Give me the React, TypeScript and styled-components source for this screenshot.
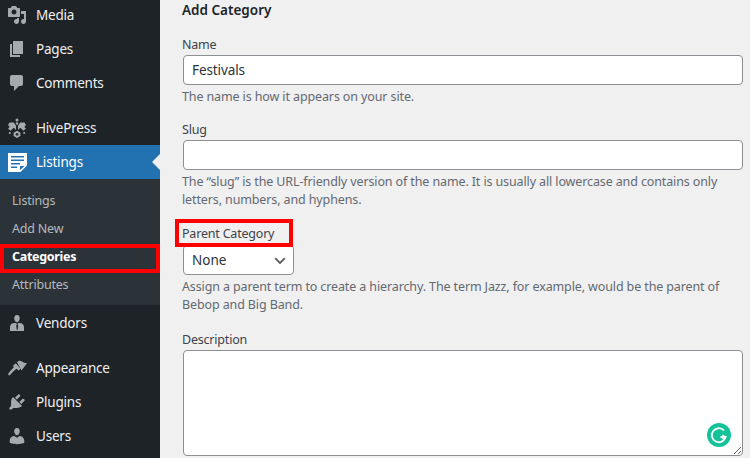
import React from 'react';
import styled, { createGlobalStyle } from 'styled-components';

const GlobalStyle = createGlobalStyle`
  html, body {
    margin: 0;
    height: 458px;
    overflow: hidden;
    background: #f0f0f1;
    font-family: "Noto Sans", "Open Sans", sans-serif;
    font-size: 13px;
  }
`;

const icons: Record<string, React.ReactNode> = {
  media: <path d="M13 11V4c0-.55-.45-1-1-1h-1.67L9 1H5L3.67 3H2c-.55 0-1 .45-1 1v7c0 .55.45 1 1 1h10c.55 0 1-.45 1-1zM7 4.5c1.38 0 2.5 1.12 2.5 2.5S8.38 9.5 7 9.5 4.5 8.38 4.5 7 5.62 4.5 7 4.5zM14 6h5v10.5c0 1.38-1.12 2.5-2.5 2.5S14 17.88 14 16.5s1.12-2.5 2.5-2.5c.17 0 .34.02.5.05V9h-3V6zm-4 8.05V13h2v3.5c0 1.38-1.12 2.5-2.5 2.5S7 17.88 7 16.5 8.12 14 9.5 14c.17 0 .34.02.5.05z" />,
  pages: <path d="M6 15V2h10v13H6zm-1 1h8v2H3V5h2v11z" />,
  comments: <path d="M5 2h9c1.1 0 2 .9 2 2v7c0 1.1-.9 2-2 2h-2l-5 5v-5H5c-1.1 0-2-.9-2-2V4c0-1.1.9-2 2-2z" />,
  hive: (
    <>
      <path d="M2.500 4.500h4.300l2.200 3.300v4.200L6.800 9.800 3.500 12.800 1 10.500l1.700-1.500L1 7z" />
      <path d="M17.500 4.500h-4.300L11 7.800v4.200l2.200-2.200 3.300 3 2.500-2.300-1.700-1.500L19 7z" />
      <path fillRule="evenodd" d="M10 12.800l3.400 2v3.200L10 20l-3.400-2v-3.200zM10 15l-1.400.8v1.200l1.400.8 1.400-.8v-1.200z" />
      <circle cx="10" cy="2" r="1.500" />
      <circle cx="10" cy="5.500" r="1.200" />
      <circle cx="2.800" cy="15" r="1.100" />
      <circle cx="17.200" cy="15" r="1.100" />
    </>
  ),
  listings: (
    <path
      fillRule="evenodd"
      d="M1 1h19v12.500L13.500 20H1zM4 4v1.600h13V4zM4 7.500v1.600h13V7.500zM4 11v1.600h9V11zM4 14.500v1.600h6v-1.600zM13 14v4l4.600-4z"
    />
  ),
  vendors: (
    <>
      <path d="M10 9.250c-2.270 0-2.730-3.440-2.730-3.440C7 4.020 7.820 2 9.970 2c2.160 0 2.980 2.020 2.710 3.810 0 0-.41 3.440-2.680 3.440z" />
      <path
        fillRule="evenodd"
        d="M5.400 10.200c-1.500.6-2.400 2.400-2.400 4.200V18h14v-3.600c0-1.800-.9-3.600-2.400-4.200l-3.400-.2-.7 1.400.7 1-.6 4.600h-.8L9.200 12.400l.7-1-.7-1.400z"
      />
    </>
  ),
  appearance: (
    <>
      <path d="M10 4.200c1.700-1.700 3.300-1.800 5-.6 1.600 1.100 3 1.700 5 1.700l-5.500 7.200z" />
      <path d="M8.800 5.200l4.700 5.600-1.800 1.800-2.200-1.900c-2 1.500-4.500 4-6.500 6.300-.8.9-2.400-.3-1.700-1.300 1.800-2.400 4-4.800 5.700-6.600L5.800 8z" />
    </>
  ),
  plugins: <path d="M13.11 4.360L9.870 7.600 8 5.730l3.240-3.240c.35-.34 1.050-.2 1.560.32.52.51.66 1.210.31 1.550zm-8 1.770l.91-1.120 9.010 9.010-1.190.84c-.71.71-2.630 1.160-3.820 1.160H6.140L4.900 17.260c-.59.59-1.540.59-2.120 0-.59-.58-.59-1.530 0-2.120l1.240-1.240v-3.880c0-1.130.4-3.190 1.090-3.890zm7.260 3.970l3.240-3.240c.34-.35 1.040-.21 1.550.31.52.51.66 1.210.31 1.550l-3.240 3.250z" />,
  users: <path d="M10 9.250c-2.270 0-2.730-3.440-2.730-3.440C7 4.020 7.820 2 9.970 2c2.160 0 2.980 2.020 2.710 3.810 0 0-.41 3.440-2.680 3.440zm0 2.570L12.720 10c2.390 0 4.520 2.330 4.520 4.530v2.490s-3.650 1.130-7.240 1.130c-3.650 0-7.240-1.130-7.240-1.130v-2.490c0-2.250 1.940-4.480 4.470-4.480z" />,
};

const Page = styled.div`
  display: flex;
  width: 750px;
  height: 458px;
  overflow: hidden;
  position: relative;
`;

const Sidebar = styled.nav`
  width: 160px;
  flex-shrink: 0;
  background: #1d2327;
  height: 458px;
  overflow: hidden;
`;

const MenuGroup = styled.div<{ $first?: boolean }>`
  margin-top: ${p => (p.$first ? '-2px' : '11px')};
`;

const MenuRow = styled.div<{ $active?: boolean }>`
  box-sizing: border-box;
  height: 34px;
  padding-bottom: 1px;
  display: flex;
  align-items: center;
  position: relative;
  color: ${p => (p.$active ? '#fff' : '#f0f0f1')};
  background: ${p => (p.$active ? '#2271b1' : 'transparent')};
  font-size: 13.5px;
  letter-spacing: -0.2px;
`;

const MenuIcon = styled.svg<{ $active?: boolean }>`
  width: 20px;
  height: 20px;
  margin: 1px 9px 0 7px;
  fill: ${p => (p.$active ? '#fff' : '#a7aaad')};
  flex-shrink: 0;
`;

const Arrow = styled.span`
  position: absolute;
  right: 0;
  top: 9px;
  border: 8px solid transparent;
  border-right-color: #f0f0f1;
  border-left-width: 0;
`;

const SubMenu = styled.div`
  background: #2c3338;
  padding: 8px 0 6px;
  margin-bottom: 1px;
`;

const SubItem = styled.div<{ $current?: boolean }>`
  height: 28px;
  line-height: 28px;
  padding-left: 12px;
  font-size: 12.5px;
  letter-spacing: ${p => (p.$current ? '-0.3px' : '-0.2px')};
  color: ${p => (p.$current ? '#fff' : '#b4b9be')};
  font-weight: ${p => (p.$current ? 700 : 400)};
`;

const Content = styled.main`
  flex: 1;
  padding: 0 7px 0 23px;
  color: #3c434a;
`;

const Heading = styled.h2`
  margin: 0 0 0 -1px;
  height: 22px;
  line-height: 21px;
  font-size: 13.5px;
  font-weight: 600;
  color: #1d2327;
`;

const Field = styled.div<{ $gap: number }>`
  margin-top: ${p => p.$gap}px;
  display: flex;
  flex-direction: column;
  align-items: flex-start;
`;

const Label = styled.label`
  margin-left: -1px;
  line-height: 18px;
  font-size: 12.5px;
  letter-spacing: -0.2px;
  color: #3c434a;
`;

const TextInput = styled.input`
  box-sizing: border-box;
  width: 560px;
  height: 30px;
  margin-top: 1px;
  padding: 0 8px;
  border: 1px solid #8c8f94;
  border-radius: 4px;
  background: #fff;
  font: 13.5px "Noto Sans", sans-serif;
  letter-spacing: -0.1px;
  color: #2c3338;
`;

const Select = styled.select`
  box-sizing: border-box;
  appearance: none;
  width: 111px;
  height: 30px;
  margin-top: 2px;
  padding: 0 24px 0 8px;
  border: 1px solid #8c8f94;
  border-radius: 4px;
  font: 13.5px "Noto Sans", sans-serif;
  color: #2c3338;
  background: #fff url("data:image/svg+xml;charset=utf8,%3Csvg xmlns='http://www.w3.org/2000/svg' width='20' height='20'%3E%3Cpath d='M5 6l5 5 5-5 2 1-7 7-7-7 2-1z' fill='%23555'/%3E%3C/svg%3E") no-repeat right 5px top 55%;
  background-size: 16px 16px;
`;

const Help = styled.p`
  margin: 3px 0 0 -1px;
  width: 561px;
  line-height: 18px;
  font-size: 12.5px;
  letter-spacing: -0.12px;
  color: #646970;
`;

const TextAreaWrap = styled.div`
  position: relative;
  width: 560px;
  height: 106px;
  margin-top: 1px;
`;

const TextArea = styled.textarea`
  box-sizing: border-box;
  display: block;
  width: 100%;
  height: 100%;
  border: 1px solid #8c8f94;
  border-radius: 4px;
  background: #fff;
  resize: vertical;
`;

const Grammarly = styled.svg`
  position: absolute;
  right: 12px;
  bottom: 9px;
  width: 24px;
  height: 24px;
`;

const RedBox = styled.div<{ $x: number; $y: number; $w: number; $h: number }>`
  position: absolute;
  left: ${p => p.$x}px;
  top: ${p => p.$y}px;
  width: ${p => p.$w}px;
  height: ${p => p.$h}px;
  box-sizing: border-box;
  border: 4.5px solid #f00;
  pointer-events: none;
`;

const Item = ({ icon, label, active }: { icon: string; label: string; active?: boolean }) => (
  <MenuRow $active={active}>
    <MenuIcon viewBox="0 0 20 20" $active={active}>{icons[icon]}</MenuIcon>
    {label}
    {active && <Arrow />}
  </MenuRow>
);

export default function App() {
  return (
    <Page>
      <GlobalStyle />
      <Sidebar>
        <MenuGroup $first>
          <Item icon="media" label="Media" />
          <Item icon="pages" label="Pages" />
          <Item icon="comments" label="Comments" />
        </MenuGroup>
        <MenuGroup>
          <Item icon="hive" label="HivePress" />
          <Item icon="listings" label="Listings" active />
          <SubMenu>
            <SubItem>Listings</SubItem>
            <SubItem>Add New</SubItem>
            <SubItem $current>Categories</SubItem>
            <SubItem>Attributes</SubItem>
          </SubMenu>
          <Item icon="vendors" label="Vendors" />
        </MenuGroup>
        <MenuGroup>
          <Item icon="appearance" label="Appearance" />
          <Item icon="plugins" label="Plugins" />
          <Item icon="users" label="Users" />
        </MenuGroup>
      </Sidebar>
      <Content>
        <Heading>Add Category</Heading>
        <Field $gap={14}>
          <Label>Name</Label>
          <TextInput defaultValue="Festivals" />
          <Help>The name is how it appears on your site.</Help>
        </Field>
        <Field $gap={15}>
          <Label>Slug</Label>
          <TextInput />
          <Help>The “slug” is the URL-friendly version of the name. It is usually all lowercase and contains only letters, numbers, and hyphens.</Help>
        </Field>
        <Field $gap={16}>
          <Label>Parent Category</Label>
          <Select defaultValue="None"><option>None</option></Select>
          <Help>Assign a parent term to create a hierarchy. The term Jazz, for example, would be the parent of Bebop and Big Band.</Help>
        </Field>
        <Field $gap={17}>
          <Label>Description</Label>
          <TextAreaWrap>
            <TextArea />
            <Grammarly viewBox="0 0 24 24">
              <circle cx="12" cy="12" r="12" fill="#15c39a" />
              <path d="M17 7.500A7 7 0 1 0 18.600 14H13.500" fill="none" stroke="#fff" strokeWidth="1.800" />
              <path d="M15.500 16l2.500-2-2.500-2" fill="none" stroke="#fff" strokeWidth="1.400" />
            </Grammarly>
          </TextAreaWrap>
        </Field>
      </Content>
      <RedBox $x={0} $y={244} $w={160} $h={29} />
      <RedBox $x={175} $y={219} $w={118} $h={28} />
    </Page>
  );
}
